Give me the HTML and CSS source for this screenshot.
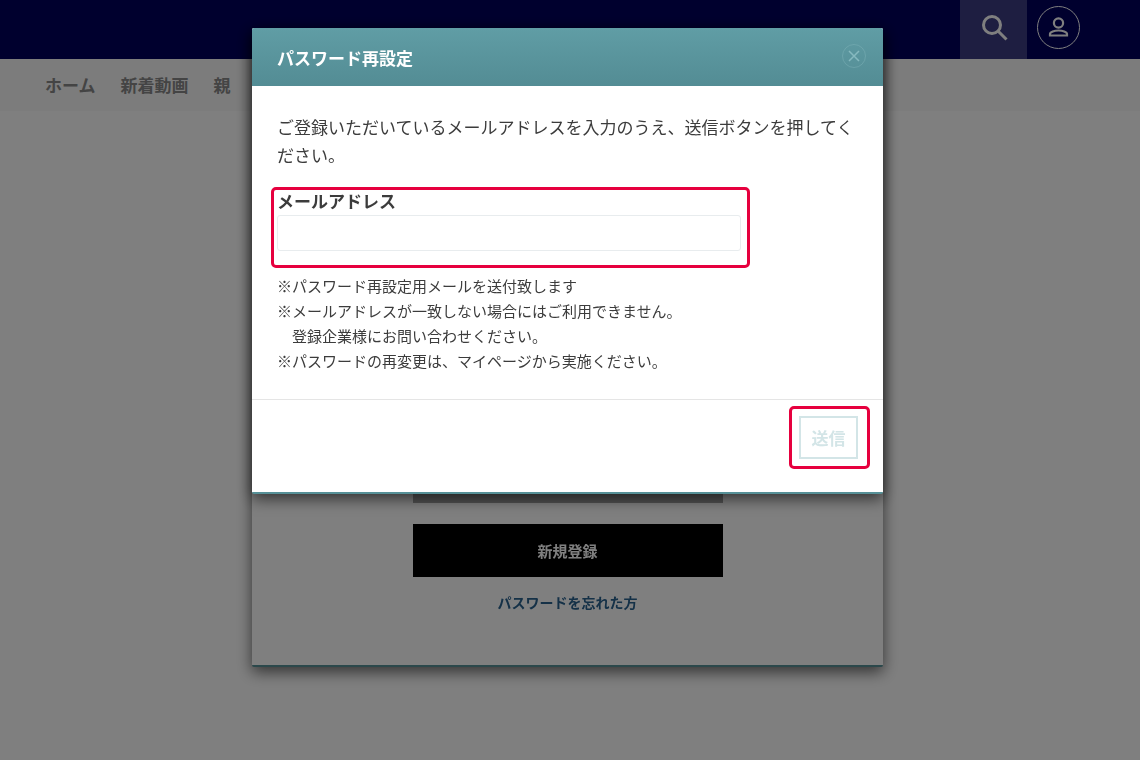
FILE: index.html
```html
<!DOCTYPE html>
<html lang="ja">
<head>
    <meta charset="UTF-8">
    <meta name="viewport" content="width=device-width, initial-scale=1.0">
    <title>パスワード再設定</title>
    <link rel="stylesheet" href="styles.css">
</head>
<body>

    <!-- Header -->
    <header class="header">
        <button type="button" class="search-btn" aria-label="検索">
            <svg width="28" height="28" viewBox="0 0 28 28" fill="none" stroke="currentColor" stroke-width="3">
                <circle cx="12" cy="11" r="8.5"/>
                <path d="M18 17L26.500 25.500"/>
            </svg>
        </button>
        <a href="#" class="account-btn" aria-label="マイページ">
            <svg width="22" height="22" viewBox="0 0 22 22" fill="none" stroke="currentColor" stroke-width="2.2">
                <circle cx="10.500" cy="6" r="4.600"/>
                <path d="M2 18.500V17C2 14.800 6.500 13.500 10.500 13.500S19 14.800 19 17V18.500Z"/>
            </svg>
        </a>
    </header>

    <!-- Navigation -->
    <nav class="nav">
        <a href="#">ホーム</a>
        <a href="#">新着動画</a>
        <a href="#">親</a>
    </nav>

    <!-- Login Popup -->
    <div class="popup">
        <div class="login">
            <button type="button" class="login-btn" aria-label="ログイン"></button>
            <button type="button" class="register-btn">新規登録</button>
            <a href="#" class="forgot-link">パスワードを忘れた方</a>
        </div>
    </div>

    <!-- Password Reset Popup -->
    <div class="popup backdrop">
        <form class="reset" role="dialog" aria-labelledby="reset-title">
            <div class="reset-header">
                <h1 id="reset-title">パスワード再設定</h1>
                <button type="button" class="close-btn" aria-label="閉じる">
                    <svg width="26" height="26" viewBox="0 0 26 26" fill="none" stroke="currentColor">
                        <circle cx="13" cy="12" r="11.5" stroke-opacity="0.4"/>
                        <path d="M8 7L18 17M18 7L8 17" stroke-width="1.5"/>
                    </svg>
                </button>
            </div>
            <div class="reset-body">
                <p>ご登録いただいているメールアドレスを入力のうえ、送信ボタンを押してください。</p>
                <div class="highlight field">
                    <label for="email">メールアドレス</label>
                    <input type="email" id="email">
                </div>
                <ul class="notes">
                    <li>※パスワード再設定用メールを送付致します</li>
                    <li>※メールアドレスが一致しない場合にはご利用できません。<br>　登録企業様にお問い合わせください。</li>
                    <li>※パスワードの再変更は、マイページから実施ください。</li>
                </ul>
            </div>
            <div class="reset-footer">
                <div class="highlight submit">
                    <button type="submit" class="submit-btn" disabled>送信</button>
                </div>
            </div>
        </form>
    </div>

</body>
</html>
```

FILE: styles.css
```css
* {
    margin: 0;
    padding: 0;
    box-sizing: border-box;
}
body {
    background-color: #fff;
    color: #3c3c3c;
    font-family: "Noto Sans CJK JP", sans-serif;
    font-size: 17px;
}
button, input {
    font-family: inherit;
    font-size: 17px;
}
a {
    text-decoration: none;
}
.header {
    display: flex;
    justify-content: flex-end;
    gap: 10px;
    height: 59px;
    padding-right: 60px;
    background-color: #00005c;
}
.search-btn {
    width: 67px;
    padding-bottom: 4px;
    display: flex;
    align-items: center;
    justify-content: center;
    border: none;
    background-color: #3c3c82;
    color: #fff;
}
.account-btn {
    width: 43px;
    height: 43px;
    margin-top: 6px;
    display: flex;
    align-items: center;
    justify-content: center;
    border: 1px solid #fff;
    border-radius: 50%;
    color: #fff;
}
.nav {
    display: flex;
    gap: 25px;
    height: 52px;
    padding: 0 45px;
    background-color: #f9f9f9;
    line-height: 52px;
}
.nav a {
    color: #888;
    font-weight: bold;
}
.popup {
    position: fixed;
    top: 0;
    left: 0;
    width: 100%;
    height: 100%;
    padding: 28px 5px 0 0;
    display: flex;
    align-items: flex-start;
    justify-content: center;
}
.backdrop {
    background-color: rgba(0, 0, 0, 0.5);
}
.login, .reset {
    width: 100%;
    max-width: 631px;
    background-color: #fff;
    border-bottom: 2px solid #569097;
    border-radius: 2px;
    box-shadow: 0 5px 15px rgba(0, 0, 0, 0.6);
}
.login {
    min-height: 639px;
    padding-bottom: 52px;
    display: flex;
    flex-direction: column;
    align-items: center;
    justify-content: flex-end;
}
.login-btn, .register-btn {
    width: 310px;
    height: 53px;
    margin-bottom: 21px;
    border: none;
    background-color: #000;
    color: #fff;
    font-size: 15px;
    font-weight: bold;
}
.login-btn {
    background-color: #a4a4a4;
}
.register-btn {
    margin-bottom: 14px;
}
.forgot-link {
    color: #2a628f;
    font-size: 14px;
    font-weight: bold;
    line-height: 22px;
}
.reset-header {
    display: flex;
    align-items: center;
    justify-content: space-between;
    height: 58px;
    padding: 0 16px 0 25px;
    background: linear-gradient(#609da5, #538c94);
    border-radius: 2px 2px 0 0;
    color: #fff;
}
.reset-header h1 {
    font-size: 17px;
}
.close-btn {
    display: flex;
    border: none;
    background: none;
    color: #86b9bf;
}
.reset-body {
    padding: 27px 25px 26px;
    border-bottom: 1px solid #e5e5e5;
    line-height: 28px;
}
.highlight {
    border: 3px solid #e6003e;
    border-radius: 5px;
}
.field {
    width: 479px;
    max-width: 100%;
    margin: 18px 0 5px -6px;
    padding: 0 6px 14px 3px;
}
.field label {
    display: block;
    margin-bottom: 3px;
    font-weight: bold;
    line-height: 22px;
}
.field input {
    display: block;
    width: 100%;
    height: 36px;
    padding: 0 10px;
    border: 1px solid #e8ecee;
    border-radius: 3px;
}
.notes {
    list-style: none;
    font-size: 15px;
    line-height: 25px;
}
.reset-footer {
    display: flex;
    justify-content: flex-end;
    padding: 6px 13px 23px;
}
.submit {
    padding: 7px 9px 7px 7px;
}
.submit-btn {
    display: block;
    width: 59px;
    height: 43px;
    border: 2px solid #d3e5e7;
    background-color: #fff;
    color: #d3e5e7;
    font-weight: bold;
}
```
